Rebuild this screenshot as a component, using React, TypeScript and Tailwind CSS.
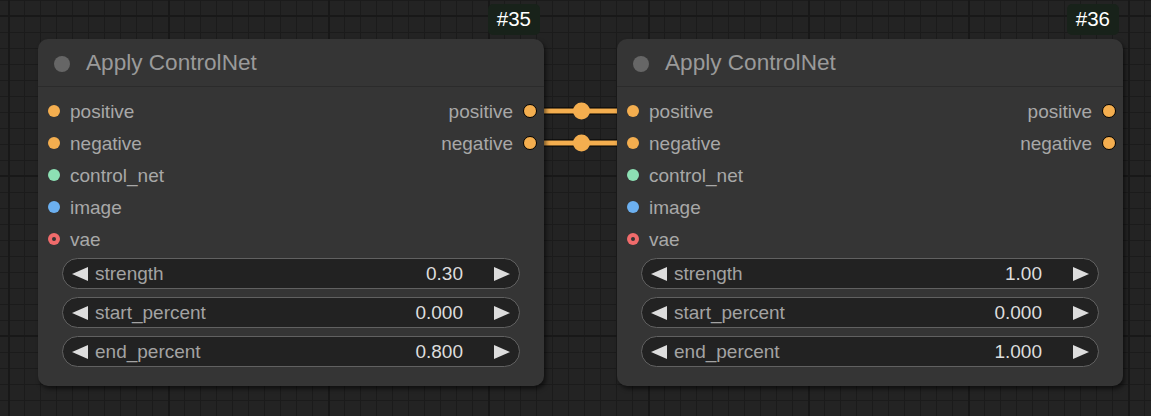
import React from "react";

const ORANGE = "#f4ae4f";

type Slot = { name: string; color: string; ring?: boolean };
type Widget = { name: string; value: string };

const inputs: Slot[] = [
  { name: "positive", color: ORANGE },
  { name: "negative", color: ORANGE },
  { name: "control_net", color: "#8de0b4" },
  { name: "image", color: "#6cb0f0" },
  { name: "vae", color: "#f06b6b", ring: true },
];

function LeftArrow() {
  return (
    <svg width="16" height="14" viewBox="0 0 16 14" className="shrink-0">
      <polygon points="0,7 16,0 16,14" fill="#dddddd" />
    </svg>
  );
}
function RightArrow() {
  return (
    <svg width="16" height="14" viewBox="0 0 16 14" className="shrink-0">
      <polygon points="16,7 0,0 0,14" fill="#dddddd" />
    </svg>
  );
}

function Node({
  left,
  id,
  widgets,
}: {
  left: number;
  id: string;
  widgets: Widget[];
}) {
  return (
    <div
      className="absolute top-[39px] w-[506px] h-[347px] rounded-[10px] bg-[#353535] shadow-[2px_3px_4px_rgba(0,0,0,0.55)]"
      style={{ left }}
    >
      <div className="absolute right-[4px] -top-[35px] h-[31px] px-[9px] rounded-[5px] bg-[#18221a] flex items-center text-white text-[20.5px] leading-none">
        {id}
      </div>
      <div className="h-[48px] flex items-center pl-[16px] pt-[2px] border-b border-[#2b2b2b]">
        <div className="w-[16px] h-[16px] rounded-full bg-[#666666]" />
        <div className="ml-[16px] text-[22.6px] text-[#9a9a9a] leading-none">Apply ControlNet</div>
      </div>
      <div className="pt-[8px] flex flex-col">
        {inputs.map((s, i) => (
          <div key={s.name} className="h-[32px] flex items-center relative">
            <div className="flex items-center pl-[10px]">
              <div
                className="w-[12px] h-[12px] rounded-full flex items-center justify-center"
                style={{ backgroundColor: s.color }}
              >
                {s.ring && <div className="w-[4px] h-[4px] rounded-full bg-[#353535]" />}
              </div>
              <span className="ml-[10px] text-[19px] text-[#a8a8a8] leading-none">{s.name}</span>
            </div>
            {i < 2 && (
              <div className="ml-auto flex items-center pr-[7px]">
                <span className="text-[19px] text-[#a8a8a8] leading-none">{s.name}</span>
                <div
                  className="ml-[10px] w-[14px] h-[14px] rounded-full border-[1.5px] border-black"
                  style={{ backgroundColor: ORANGE }}
                />
              </div>
            )}
          </div>
        ))}
        <div className="mt-[3px] px-[24px] flex flex-col gap-[8px]">
          {widgets.map((w) => (
            <div
              key={w.name}
              className="h-[31px] rounded-full bg-[#222222] border border-[#616161] flex items-center pl-[9px] pr-[9px]"
            >
              <LeftArrow />
              <span className="ml-[7px] text-[19px] text-[#a3a3a3] leading-none">{w.name}</span>
              <span className="ml-auto text-[19px] text-[#dddddd] leading-none">{w.value}</span>
              <div className="ml-[31px]">
                <RightArrow />
              </div>
            </div>
          ))}
        </div>
      </div>
    </div>
  );
}

function Links() {
  const ys = [111, 143];
  return (
    <svg className="absolute left-0 top-0" width="1151" height="416" viewBox="0 0 1151 416">
      {ys.map((y) => (
        <g key={y}>
          <line x1="530" y1={y} x2="632" y2={y} stroke="#000" strokeWidth="7" />
          <line x1="530" y1={y} x2="632" y2={y} stroke={ORANGE} strokeWidth="5" />
          <circle cx="581.5" cy={y} r="8.5" fill={ORANGE} />
        </g>
      ))}
    </svg>
  );
}

export default function App() {
  return (
    <div
      className="relative w-[1151px] h-[416px] overflow-hidden bg-[#232323] font-['Liberation_Sans',Arial,sans-serif] bg-[linear-gradient(to_right,#181818_2px,transparent_2px),linear-gradient(to_bottom,#181818_2px,transparent_2px),linear-gradient(to_right,#1b1b1b_1px,transparent_1px),linear-gradient(to_bottom,#1b1b1b_1px,transparent_1px)] bg-[size:160px_160px,160px_160px,16px_16px,16px_16px] bg-[position:8px_15px,8px_15px,8px_0px,8px_0px]"
    >
      <Links />
      <Node
        left={38}
        id="#35"
        widgets={[
          { name: "strength", value: "0.30" },
          { name: "start_percent", value: "0.000" },
          { name: "end_percent", value: "0.800" },
        ]}
      />
      <Node
        left={617}
        id="#36"
        widgets={[
          { name: "strength", value: "1.00" },
          { name: "start_percent", value: "0.000" },
          { name: "end_percent", value: "1.000" },
        ]}
      />
    </div>
  );
}
